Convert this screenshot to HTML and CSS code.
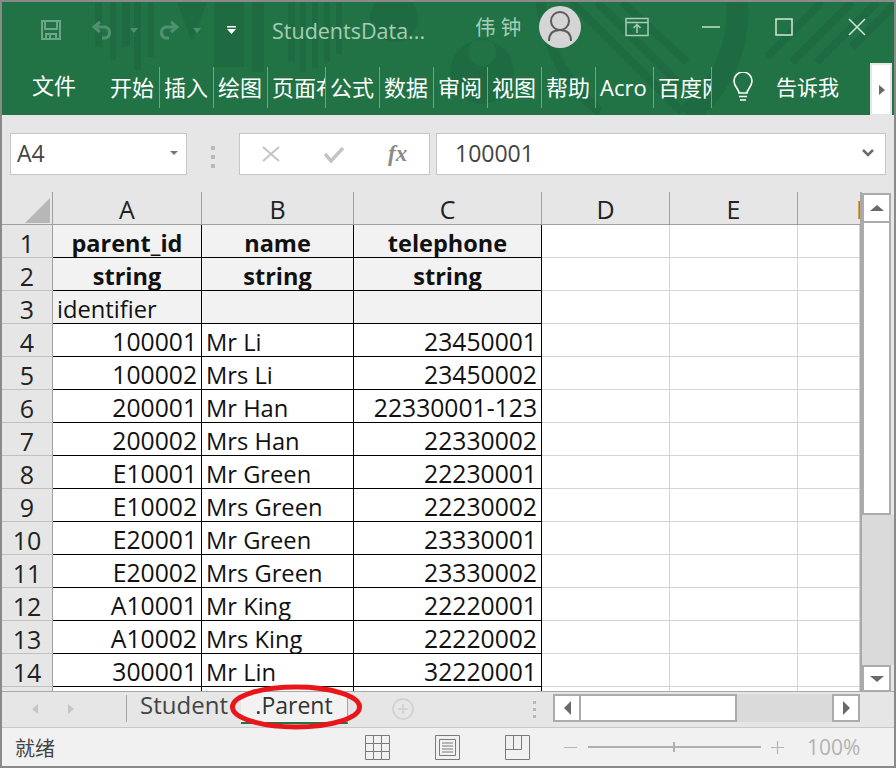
FILE: index.html
```html
<!DOCTYPE html>
<html>
<head>
<meta charset="utf-8">
<title>StudentsData</title>
<link rel="stylesheet" href="styles.css">
</head>
<body>
<div class="window">
  <header class="ribbon">
    <svg class="ribbon-art" width="892" height="113" viewBox="0 0 892 113">
      <g fill="#1f6b41">
        <rect x="93" y="0" width="7" height="45"/><rect x="108" y="0" width="6" height="58"/><rect x="120" y="0" width="8" height="45"/>
        <rect x="132" y="0" width="7" height="68"/><rect x="146" y="0" width="6" height="55"/>
        <path d="M175 0h30l-15 40z"/>
        <path d="M212 0h30v65h-30z"/>
        <rect x="250" y="0" width="12" height="70"/>
        <rect x="286" y="0" width="7" height="60"/><rect x="298" y="0" width="6" height="70"/><rect x="310" y="0" width="6" height="66"/><rect x="322" y="0" width="6" height="60"/><rect x="334" y="0" width="6" height="52"/>
        <circle cx="392" cy="16" r="24"/>
        <path d="M448 70a32 32 0 1 1 64 0a32 32 0 1 1 -64 0zM466 50a14 14 0 1 0 28 0a14 14 0 1 0 -28 0z"/>
      </g>
      <g fill="none" stroke="#1f6b41">
        <path d="M538 -10a160 160 0 0 0 60 120" stroke-width="10"/>
        <path d="M570 0l110 110M595 0l85 85M620 0l65 60" stroke-width="8"/>
        <path d="M735 0a130 130 0 0 1 -50 113" stroke-width="22"/>
        <path d="M765 55l55 -55M790 60l60 -60M815 60l60 -60M850 45l45 -45" stroke-width="8"/>
      </g>
    </svg>
    <div class="titlebar">
      <div class="qat">
        <svg class="qat-save" width="20" height="20" viewBox="0 0 20 20"><path d="M1 1h18v18h-18z M4 2v7h12v-7 M5 19v-5h10v5 M9 14v5" fill="none" stroke="#6ea586" stroke-width="2"/></svg>
        <svg class="qat-undo" width="24" height="20" viewBox="0 0 24 20"><path d="M8 2l-6 5 6 5 M2 7h12a6 6 0 0 1 0 11h-4" fill="none" stroke="#4f9070" stroke-width="3"/></svg>
        <span class="qat-caret"></span>
        <svg class="qat-redo" width="24" height="20" viewBox="0 0 24 20"><path d="M16 2l6 5-6 5 M22 7h-12a6 6 0 0 0 0 11h4" fill="none" stroke="#4f9070" stroke-width="3"/></svg>
        <span class="qat-caret"></span>
        <svg class="qat-more" width="9" height="8" viewBox="0 0 9 8"><path d="M0 0h9v1.500h-9z M0 3h9l-4.500 5z" fill="#fff"/></svg>
      </div>
      <span class="doc-name">StudentsData...</span>
      <span class="user-name">伟 钟</span>
      <div class="avatar">
        <svg width="42" height="42" viewBox="0 0 42 42"><circle cx="21" cy="15" r="9" fill="none" stroke="#5c5c5c" stroke-width="2"/><path d="M10 35c0-8 4-11 11-11s11 3 11 11" fill="none" stroke="#5c5c5c" stroke-width="2"/></svg>
      </div>
      <svg class="win-btn win-display" width="24" height="20" viewBox="0 0 24 20"><path d="M1 1.500h22v17h-22z M1 5.500h22 M12 16v-8 M8.500 11l3.500-3.500 3.500 3.500" fill="none" stroke="#a9cbb7" stroke-width="1.500"/></svg>
      <svg class="win-btn win-min" width="18" height="20" viewBox="0 0 18 20"><path d="M0 10h18" stroke="#c4dccd" stroke-width="1.500"/></svg>
      <svg class="win-btn win-max" width="18" height="18" viewBox="0 0 18 18"><path d="M1 1h16v16h-16z" fill="none" stroke="#d5e6db" stroke-width="1.500"/></svg>
      <svg class="win-btn win-close" width="18" height="18" viewBox="0 0 18 18"><path d="M1 1l16 16M17 1l-16 16" stroke="#d5e6db" stroke-width="1.500"/></svg>
    </div>
    <nav class="tabs">
      <span class="tab tab-file">文件</span>
      <span class="tab tab-home">开始</span>
      <span class="tab">插入</span>
      <span class="tab">绘图</span>
      <span class="tab tab-wide">页面布局</span>
      <span class="tab">公式</span>
      <span class="tab">数据</span>
      <span class="tab">审阅</span>
      <span class="tab">视图</span>
      <span class="tab">帮助</span>
      <span class="tab tab-wide">Acro</span>
      <span class="tab tab-wide">百度网盘</span>
      <svg class="bulb" width="22" height="30" viewBox="0 0 22 30"><path d="M7 21c0-4-5-6-5-12a9 9 0 0 1 18 0c0 6-5 8-5 12z M7 24.500h8 M8 28h6" fill="none" stroke="#fff" stroke-width="1.600"/></svg>
      <span class="tell">告诉我</span>
      <span class="tabs-next"></span>
    </nav>
  </header>

  <div class="formula-bar">
    <div class="name-box"><span>A4</span><i class="caret-down"></i></div>
    <div class="grip"><i></i><i></i><i></i></div>
    <div class="fx-buttons">
      <svg width="18" height="18" viewBox="0 0 18 18"><path d="M1 2l16 14M17 2l-16 14" stroke="#c4c4c4" stroke-width="2"/></svg>
      <svg width="20" height="18" viewBox="0 0 20 18"><path d="M1 9l6 7 12-13" fill="none" stroke="#c4c4c4" stroke-width="3.500"/></svg>
      <span class="fx">fx</span>
    </div>
    <div class="formula-input"><span>100001</span>
      <svg width="12" height="8" viewBox="0 0 12 8"><path d="M1 1l5 5 5-5" fill="none" stroke="#6a6a6a" stroke-width="2.500"/></svg>
    </div>
  </div>

  <div class="sheet-area">
    <div class="sheet-clip">
      <table class="sheet">
        <colgroup><col class="c-row"><col class="c-a"><col class="c-b"><col class="c-c"><col class="c-d"><col class="c-e"><col class="c-f"></colgroup>
        <thead>
          <tr><th class="corner"><i></i></th><th>A</th><th>B</th><th>C</th><th>D</th><th>E</th><th class="col-f">F</th></tr>
        </thead>
        <tbody>
          <tr><th>1</th><td class="box head">parent_id</td><td class="box head">name</td><td class="box head">telephone</td><td></td><td></td><td></td></tr>
          <tr><th>2</th><td class="box head">string</td><td class="box head">string</td><td class="box head">string</td><td></td><td></td><td></td></tr>
          <tr><th>3</th><td class="box shade">identifier</td><td class="box shade"></td><td class="box shade"></td><td></td><td></td><td></td></tr>
          <tr><th>4</th><td class="box num">100001</td><td class="box">Mr Li</td><td class="box num">23450001</td><td></td><td></td><td></td></tr>
          <tr><th>5</th><td class="box num">100002</td><td class="box">Mrs Li</td><td class="box num">23450002</td><td></td><td></td><td></td></tr>
          <tr><th>6</th><td class="box num">200001</td><td class="box">Mr Han</td><td class="box num">22330001-123</td><td></td><td></td><td></td></tr>
          <tr><th>7</th><td class="box num">200002</td><td class="box">Mrs Han</td><td class="box num">22330002</td><td></td><td></td><td></td></tr>
          <tr><th>8</th><td class="box num">E10001</td><td class="box">Mr Green</td><td class="box num">22230001</td><td></td><td></td><td></td></tr>
          <tr><th>9</th><td class="box num">E10002</td><td class="box">Mrs Green</td><td class="box num">22230002</td><td></td><td></td><td></td></tr>
          <tr><th>10</th><td class="box num">E20001</td><td class="box">Mr Green</td><td class="box num">23330001</td><td></td><td></td><td></td></tr>
          <tr><th>11</th><td class="box num">E20002</td><td class="box">Mrs Green</td><td class="box num">23330002</td><td></td><td></td><td></td></tr>
          <tr><th>12</th><td class="box num">A10001</td><td class="box">Mr King</td><td class="box num">22220001</td><td></td><td></td><td></td></tr>
          <tr><th>13</th><td class="box num">A10002</td><td class="box">Mrs King</td><td class="box num">22220002</td><td></td><td></td><td></td></tr>
          <tr><th>14</th><td class="box num">300001</td><td class="box">Mr Lin</td><td class="box num">32220001</td><td></td><td></td><td></td></tr>
          <tr><th></th><td class="box"></td><td class="box"></td><td class="box"></td><td></td><td></td><td></td></tr>
        </tbody>
      </table>
    </div>
    <div class="vscroll">
      <div class="sb-btn sb-up"><i class="arrow-up"></i></div>
      <div class="vthumb"></div>
      <div class="vtrack"></div>
      <div class="sb-btn sb-down"><i class="arrow-down"></i></div>
    </div>
  </div>

  <div class="tabstrip">
    <div class="sheet-nav"><i class="nav-left"></i><i class="nav-right"></i></div>
    <span class="strip-sep"></span>
    <span class="sheet-tab">Student</span>
    <span class="sheet-tab active">.Parent</span>
    <svg class="add-sheet" width="22" height="22" viewBox="0 0 22 22"><circle cx="11" cy="11" r="10" fill="none" stroke="#cfcfcf" stroke-width="1.500"/><path d="M11 6v10M6 11h10" stroke="#cfcfcf" stroke-width="1.500"/></svg>
    <div class="grip grip-strip"><i></i><i></i><i></i></div>
    <div class="hscroll">
      <div class="sb-btn sb-h"><i class="arrow-left"></i></div>
      <div class="hthumb"></div>
      <div class="htrack"></div>
      <div class="sb-btn sb-h"><i class="arrow-right"></i></div>
    </div>
    <svg class="circle-mark" width="136" height="50" viewBox="0 0 136 50"><ellipse cx="68" cy="25" rx="63.500" ry="20" fill="none" stroke="#e8161b" stroke-width="5"/></svg>
  </div>

  <footer class="statusbar">
    <span class="status-text">就绪</span>
    <svg class="view-icon" width="25" height="25" viewBox="0 0 25 25"><path d="M.5.500h24v24h-24z M.5 8.500h24 M.5 16.500h24 M8.500.500v24 M16.500.500v24" fill="none" stroke="#7b7b7b"/></svg>
    <svg class="view-icon view-page" width="25" height="25" viewBox="0 0 25 25"><path d="M.5.500h24v24h-24z M4.500 4.500h16v16h-16z M7 8h11 M7 11h11 M7 14h11 M7 17h11" fill="none" stroke="#7b7b7b"/></svg>
    <svg class="view-icon view-break" width="25" height="25" viewBox="0 0 25 25"><path d="M.5.500h24v24h-24z M.5 14.500h16 M8.500.500v14 M16.500.500v14" fill="none" stroke="#7b7b7b"/></svg>
    <span class="zoom-minus"></span>
    <div class="zoom-slider"><i></i></div>
    <svg class="zoom-plus" width="13" height="13" viewBox="0 0 13 13"><path d="M6.500 0v13M0 6.500h13" stroke="#b5b5b5" stroke-width="1.200"/></svg>
    <span class="zoom-value">100%</span>
  </footer>
</div>
</body>
</html>
```

FILE: styles.css
```css
html, body {
  margin: 0;
  padding: 0;
}
body {
  width: 896px;
  height: 768px;
  overflow: hidden;
  font-family: "Open Sans", "Noto Sans CJK SC", sans-serif;
  color: #111;
}
.window {
  box-sizing: border-box;
  width: 896px;
  height: 768px;
  border: 2px solid #8a8a8a;
  display: flex;
  flex-direction: column;
  background: #e6e6e6;
}

/* ribbon */
.ribbon {
  position: relative;
  height: 113px;
  flex: none;
  background: #217346;
  overflow: hidden;
}
.ribbon-art {
  position: absolute;
  top: 0;
  left: 0;
}
.titlebar {
  position: relative;
  height: 56px;
  display: flex;
  align-items: center;
}
.qat {
  display: flex;
  align-items: center;
  margin-left: 39px;
  width: 231px;
}
.qat-undo {
  margin-left: 31px;
}
.qat-redo {
  margin-left: 17px;
}
.qat-caret {
  width: 0;
  height: 0;
  margin-left: 14px;
  border-left: 4px solid transparent;
  border-right: 4px solid transparent;
  border-top: 5px solid #4f9070;
}
.qat-more {
  margin-left: 26px;
}
.doc-name {
  width: 203px;
  font-size: 21.500px;
  color: #a6cdb7;
}
.user-name {
  width: 64px;
  font-size: 20.500px;
  line-height: 26px;
  margin-top: -6px;
  color: #a6cdb7;
}
.avatar {
  width: 42px;
  height: 42px;
  margin-top: -6px;
  border-radius: 50%;
  background: #d5d5d5;
}
.win-btn {
  margin-top: -6px;
}
.win-display {
  margin-left: 44px;
}
.win-min {
  margin-left: 53px;
}
.win-max {
  margin-left: 55px;
}
.win-close {
  margin-left: 55px;
}
.tabs {
  position: relative;
  height: 48px;
  margin-top: 9px;
  display: flex;
  align-items: flex-start;
}
.tab {
  box-sizing: border-box;
  width: 54px;
  height: 41px;
  padding-left: 4px;
  font-size: 22px;
  line-height: 41px;
  color: #fff;
  white-space: nowrap;
  overflow: hidden;
  border-right: 1px solid #6fa488;
}
.tab-file {
  width: 98px;
  padding-left: 30px;
  margin-top: -2px;
  border-right: 0;
}
.tab-home {
  width: 60px;
  padding-left: 10px;
}
.tab-wide {
  width: 58px;
}
.bulb {
  margin: 5px 0 0 20px;
}
.tell {
  margin-left: 22px;
  font-size: 21px;
  line-height: 41px;
  color: #fff;
  width: 94px;
}
.tabs-next {
  position: relative;
  box-sizing: border-box;
  width: 22px;
  height: 53px;
  margin-top: -4px;
  background: #fff;
  border: 2px solid #e6e6e6;
}
.tabs-next::after {
  content: "";
  position: absolute;
  left: 7px;
  top: 20px;
  border-left: 6px solid #6a6a6a;
  border-top: 5px solid transparent;
  border-bottom: 5px solid transparent;
}

/* formula bar */
.formula-bar {
  height: 77px;
  flex: none;
  box-sizing: border-box;
  padding-top: 18px;
  padding-left: 8px;
  display: flex;
  align-items: flex-start;
}
.name-box, .fx-buttons, .formula-input {
  box-sizing: border-box;
  height: 42px;
  background: #fff;
  border: 1px solid #c6c6c6;
  display: flex;
  align-items: center;
}
.name-box {
  width: 177px;
  padding: 0 8px 2px 6px;
  justify-content: space-between;
  font-size: 23px;
  color: #444;
}
.caret-down {
  border-left: 4px solid transparent;
  border-right: 4px solid transparent;
  border-top: 4px solid #777;
}
.grip {
  width: 52px;
  display: flex;
  flex-direction: column;
  align-items: center;
  gap: 5px;
  padding-top: 13px;
}
.grip i {
  width: 4px;
  height: 4px;
  background: #b8b8b8;
}
.fx-buttons {
  width: 191px;
  padding-left: 22px;
  gap: 44px;
}
.fx {
  font-family: "Liberation Serif", serif;
  font-style: italic;
  font-weight: bold;
  font-size: 23px;
  color: #8a8a8a;
}
.formula-input {
  width: 450px;
  margin-left: 6px;
  padding: 0 11px 2px 18px;
  justify-content: space-between;
  font-size: 23px;
  color: #444;
}

/* grid */
.sheet-area {
  height: 499px;
  flex: none;
  display: flex;
}
.sheet-clip {
  flex: none;
  width: 858px;
  height: 499px;
  overflow: hidden;
  background: #fff;
  border-right: 2px solid #a8a8a8;
}
.sheet {
  table-layout: fixed;
  width: 858px;
  border-collapse: separate;
  border-spacing: 0;
  font-size: 23.700px;
}
.c-row { width: 51px; }
.c-a { width: 149px; }
.c-b { width: 152px; }
.c-c { width: 188px; }
.c-d { width: 128px; }
.c-e { width: 128px; }
.c-f { width: 62px; }
.sheet th {
  box-sizing: border-box;
  padding: 3px 0 0;
  height: 33px;
  line-height: 28px;
  font-size: 25px;
  font-weight: normal;
  background: #e6e6e6;
  color: #222;
  border-right: 1px solid #9f9f9f;
  border-bottom: 1px solid #c0c0c0;
  text-align: center;
  overflow: hidden;
}
.sheet thead th {
  padding-top: 2px;
  border-bottom: 1px solid #9f9f9f;
}
.sheet th.corner {
  position: relative;
}
.sheet th.col-f {
  padding-left: 58px;
  text-align: left;
  border-right: 0;
  color: #b87a2c;
}
.corner i {
  position: absolute;
  right: 2px;
  bottom: 1px;
  width: 0;
  height: 0;
  border-left: 25px solid transparent;
  border-bottom: 25px solid #b7b7b7;
}
.sheet td {
  box-sizing: border-box;
  padding: 3px 4px 0;
  height: 33px;
  line-height: 28px;
  white-space: nowrap;
  overflow: hidden;
  border-right: 1px solid #d4d4d4;
  border-bottom: 1px solid #d4d4d4;
}
.sheet td.box {
  border-right-color: #000;
  border-bottom-color: #000;
}
.head {
  background: #f2f2f2;
  font-weight: bold;
  font-size: 23.500px;
  text-align: center;
}
.shade {
  background: #f2f2f2;
}
.num {
  font-size: 24.700px;
  text-align: right;
}

/* scrollbars */
.vscroll {
  width: 32px;
  flex: none;
  padding-top: 1px;
  box-sizing: border-box;
  display: flex;
  flex-direction: column;
}
.sb-btn {
  box-sizing: border-box;
  width: 28px;
  height: 28px;
  flex: none;
  background: #fff;
  border: 2px solid #ababab;
  display: flex;
  align-items: center;
  justify-content: center;
}
.sb-up {
  width: 29px;
  height: 30px;
}
.sb-down {
  width: 29px;
  height: 27px;
}
.vthumb {
  box-sizing: border-box;
  flex: none;
  height: 292px;
  width: 29px;
  background: #fff;
  border: 2px solid #ababab;
  border-top: 0;
}
.vtrack {
  flex: none;
  height: 150px;
  background: #dadada;
}
.arrow-up {
  border-left: 7px solid transparent;
  border-right: 7px solid transparent;
  border-bottom: 6px solid #6a6a6a;
}
.arrow-down {
  border-left: 7px solid transparent;
  border-right: 7px solid transparent;
  border-top: 6px solid #6a6a6a;
}
.arrow-left {
  border-top: 7px solid transparent;
  border-bottom: 7px solid transparent;
  border-right: 7px solid #6a6a6a;
}
.arrow-right {
  border-top: 7px solid transparent;
  border-bottom: 7px solid transparent;
  border-left: 7px solid #6a6a6a;
}

/* sheet tabs */
.tabstrip {
  position: relative;
  height: 35px;
  flex: none;
  display: flex;
  align-items: flex-start;
  border-top: 1px solid #a8a8a8;
  border-bottom: 1px solid #c8c8c8;
}
.sheet-nav {
  width: 124px;
  display: flex;
  gap: 30px;
  padding: 12px 0 0 30px;
  box-sizing: border-box;
}
.nav-left {
  border-top: 5px solid transparent;
  border-bottom: 5px solid transparent;
  border-right: 6px solid #c6c6c6;
}
.nav-right {
  border-top: 5px solid transparent;
  border-bottom: 5px solid transparent;
  border-left: 6px solid #c6c6c6;
}
.strip-sep {
  width: 1px;
  height: 27px;
  margin-top: 3px;
  background: #a5a5a5;
}
.sheet-tab {
  font-size: 24px;
  line-height: 26px;
  color: #444;
}
.sheet-tab:not(.active) {
  width: 114px;
  text-align: center;
}
.sheet-tab.active {
  box-sizing: border-box;
  width: 107px;
  height: 32px;
  font-size: 23px;
  text-align: center;
  background: #f2f2f2;
  color: #333;
  border-right: 1px solid #a5a5a5;
  border-bottom: 2px solid #217346;
}
.add-sheet {
  margin: 6px 0 0 44px;
}
.grip-strip {
  width: 18px;
  margin-left: 111px;
  padding-top: 9px;
  gap: 4px;
}
.grip-strip i {
  width: 3px;
  height: 3px;
}
.hscroll {
  display: flex;
  margin-left: 10px;
  margin-top: 2px;
}
.sb-h {
  height: 28px;
}
.hthumb {
  box-sizing: border-box;
  width: 156px;
  height: 28px;
  background: #fff;
  border: 2px solid #ababab;
  border-left: 0;
}
.htrack {
  width: 95px;
  height: 28px;
  background: #dadada;
}
.circle-mark {
  position: absolute;
  left: 226px;
  top: -10px;
}

/* status bar */
.statusbar {
  flex: 1;
  display: flex;
  align-items: center;
  background: #f1f1f1;
  font-size: 20px;
  color: #444;
}
.status-text {
  width: 363px;
  padding-left: 13px;
  box-sizing: border-box;
}
.view-page {
  margin-left: 45px;
}
.view-break {
  margin-left: 45px;
}
.zoom-minus {
  width: 13px;
  height: 1px;
  margin-left: 34px;
  background: #b5b5b5;
}
.zoom-slider {
  position: relative;
  width: 173px;
  height: 2px;
  margin-left: 11px;
  background: #b0b0b0;
}
.zoom-slider i {
  position: absolute;
  left: 85px;
  top: -4px;
  width: 2px;
  height: 10px;
  background: #b0b0b0;
}
.zoom-plus {
  margin-left: 10px;
}
.zoom-value {
  margin-left: 23px;
  font-size: 21px;
  color: #b3b3b3;
}
```
